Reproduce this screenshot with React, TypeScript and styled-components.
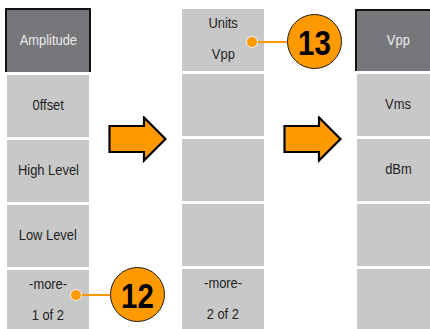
import styled, { createGlobalStyle } from "styled-components"

const GlobalStyle = createGlobalStyle`
  html, body {
    margin: 0;
    padding: 0;
    background: #ffffff;
  }
  body {
    font-family: "Liberation Sans", Arial, sans-serif;
  }
`

const Page = styled.div`
  position: relative;
  display: flex;
  flex-direction: row;
  align-items: flex-start;
  width: 430px;
  height: 329px;
  overflow: hidden;
  padding: 10px 0 0 7px;
  box-sizing: border-box;
`

const Column = styled.div<{ $shift?: number }>`
  display: flex;
  flex-direction: column;
  flex-shrink: 0;
  gap: 3px;
  width: 82px;
  margin-top: ${p => p.$shift ?? 0}px;
`

const Key = styled.div<{ $active?: boolean; $top?: number }>`
  display: flex;
  flex-direction: column;
  align-items: center;
  justify-content: center;
  gap: 16px;
  height: 62px;
  padding-bottom: 4px;
  box-sizing: border-box;
  background: ${p => (p.$active ? "#76767b" : "#c8c8c8")};
  color: ${p => (p.$active ? "#ececec" : "#1e1e1e")};
  ${p => p.$active && `
    margin: -${p.$top ?? 2}px -2px 0 -2px;
    height: ${62 + (p.$top ?? 2)}px;
    border: 2px solid #111;
    border-bottom: 0;
  `}
`

const Label = styled.span`
  display: inline-block;
  font-size: 15px;
  line-height: 15px;
  white-space: nowrap;
  transform: scaleX(0.86);
`

const Gutter = styled.div`
  flex-shrink: 0;
  width: 93px;
  padding: 106px 0 0 19px;
  box-sizing: border-box;
`

const Callout = styled.div`
  position: absolute;
  display: flex;
  flex-direction: row;
  align-items: center;
`

const Dot = styled.div`
  width: 12px;
  height: 12px;
  box-sizing: border-box;
  border-radius: 50%;
  background: #ff9900;
  border: 1.5px solid #f4f4f4;
  flex-shrink: 0;
`

const Leader = styled.div<{ $len: number }>`
  width: ${p => p.$len}px;
  height: 2px;
  background: #ff9900;
  flex-shrink: 0;
`

const Badge = styled.div`
  display: flex;
  align-items: center;
  justify-content: center;
  width: 55px;
  height: 55px;
  box-sizing: border-box;
  border-radius: 50%;
  border: 1.5px solid #1a1a1a;
  background: #ff9900;
  flex-shrink: 0;
`

const BadgeNum = styled.span`
  display: inline-block;
  color: #000;
  font-weight: bold;
  font-size: 35px;
  line-height: 35px;
  transform: scaleX(0.84);
  margin-top: 1px;
`

const Arrow = () => (
  <svg width="59" height="47" viewBox="0 0 59 47">
    <polygon
      points="1.5,10 36,10 36,1.5 57.5,23 36,44.5 36,36 1.5,36"
      fill="#ff9900"
      stroke="#000"
      strokeWidth="2.2"
      strokeLinejoin="miter"
    />
  </svg>
)

const App = () => {
  return (
    <Page>
      <GlobalStyle />
      <Column>
        <Key $active><Label>Amplitude</Label></Key>
        <Key><Label>0ffset</Label></Key>
        <Key><Label>High Level</Label></Key>
        <Key><Label>Low Level</Label></Key>
        <Key>
          <Label>-more-</Label>
          <Label>1 of 2</Label>
        </Key>
      </Column>
      <Gutter>
        <Arrow />
      </Gutter>
      <Column $shift={-1}>
        <Key>
          <Label>Units</Label>
          <Label>Vpp</Label>
        </Key>
        <Key />
        <Key />
        <Key />
        <Key>
          <Label>-more-</Label>
          <Label>2 of 2</Label>
        </Key>
      </Column>
      <Gutter>
        <Arrow />
      </Gutter>
      <Column $shift={-1}>
        <Key $active $top={0}><Label>Vpp</Label></Key>
        <Key><Label>Vms</Label></Key>
        <Key><Label>dBm</Label></Key>
        <Key />
        <Key />
      </Column>

      <Callout style={{ left: 70, top: 267 }}>
        <Dot />
        <Leader $len={28} />
        <Badge><BadgeNum>12</BadgeNum></Badge>
      </Callout>
      <Callout style={{ left: 246, top: 14 }}>
        <Dot />
        <Leader $len={29} />
        <Badge><BadgeNum>13</BadgeNum></Badge>
      </Callout>
    </Page>
  )
}

export default App
